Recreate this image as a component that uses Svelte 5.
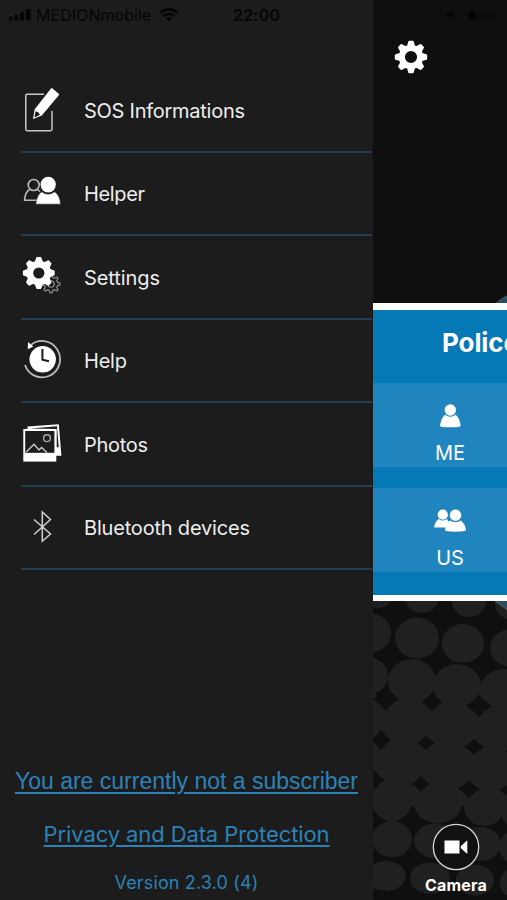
<script>
  const items = [
    { icon: 'edit', label: 'SOS Informations', w: 161 },
    { icon: 'helper', label: 'Helper', w: 61 },
    { icon: 'settings', label: 'Settings', w: 76 },
    { icon: 'help', label: 'Help', w: 43 },
    { icon: 'photos', label: 'Photos', w: 64 },
    { icon: 'bluetooth', label: 'Bluetooth devices', w: 166 }
  ];

  // Halftone backdrop: [cx, cy, rx, ry]
  const dots = [
    [4, 592, 17, 16], [49, 594, 18, 19], [96, 599, 17.5, 18], [139, 603, 17, 17],
    [-1, 633, 19, 19], [44, 638, 22, 20.5], [90, 643.5, 21, 19.5], [136, 648, 19, 18.5],
    [-3, 676, 18, 18], [39, 681, 24, 22], [84, 686, 24, 22], [131, 692, 25, 23],
    [19, 801, 20, 20], [65, 803, 24, 20], [111, 807, 20, 19], [142, 810, 14, 18],
    [19, 839, 20, 18], [62, 841, 21, 17.5], [107, 844, 21, 17], [144, 847, 18, 17],
    [13, 876, 20, 15], [57, 878, 20, 15.5], [102, 880, 19, 15.5], [141, 883, 14, 15]
  ];
  // Gaps where the dots have merged: [cx, cy, half width, half height]
  const gaps = [
    [13, 699, 13, 12], [59, 702, 11, 9], [106, 706, 13, 11],
    [8, 740, 10, 10], [53, 743, 9, 7], [101, 747, 10, 8], [137, 751, 5, 4],
    [1, 780, 11, 10], [48, 784, 9, 8], [96, 789, 11, 9], [134, 790, 8, 5]
  ];
  const diamond = ([x, y, w, h]) =>
    `M${x} ${y - h}Q${x + w * 0.42} ${y - h * 0.42} ${x + w} ${y}Q${x + w * 0.42} ${y + h * 0.42} ${x} ${y + h}Q${x - w * 0.42} ${y + h * 0.42} ${x - w} ${y}Q${x - w * 0.42} ${y - h * 0.42} ${x} ${y - h}Z`;

  function gear(cx, cy, outer, body, hole) {
    const pts = [];
    for (let i = 0; i < 8; i++) {
      const a = (i * Math.PI) / 4 - Math.PI / 2;
      for (const [r, d] of [[body, -0.26], [outer, -0.11], [outer, 0.11], [body, 0.26]]) {
        pts.push(`${(cx + r * Math.cos(a + d)).toFixed(2)} ${(cy + r * Math.sin(a + d)).toFixed(2)}`);
      }
    }
    return `M${pts.join('L')}ZM${cx - hole} ${cy}a${hole} ${hole} 0 1 0 ${2 * hole} 0a${hole} ${hole} 0 1 0 ${-2 * hole} 0Z`;
  }
</script>

<div class="screen">
  <aside class="drawer">
    <header class="status">
      <svg class="signal" width="24" height="14" viewBox="0 0 24 14">
        <rect x="0" y="8.5" width="3.5" height="4" rx="1" /><rect x="5.5" y="6.5" width="4" height="6" rx="1" />
        <rect x="11" y="4" width="4.2" height="8.5" rx="1" /><rect x="17" y="1" width="4.8" height="11.5" rx="1" />
      </svg>
      <span class="carrier">MEDIONmobile</span>
      <svg class="wifi" width="20" height="14" viewBox="0 0 20 14">
        <path d="M1.5 4.7Q10-2.2 18.5 4.7M4.5 8Q10 3.5 15.5 8" fill="none" stroke="#050505" stroke-width="2.4" />
        <path d="M6.8 10.2Q10 7.7 13.2 10.2L10 13.4Z" />
      </svg>
      <span class="time">22:00</span>
    </header>

    <nav>
      {#each items as item}
        <div class="row">
          <svg class="icon" width="42" height="46" viewBox="0 0 42 46">
            {#if item.icon === 'edit'}
              <path d="M25 7.2H7Q5.8 7.2 5.8 8.4V42Q5.8 43.7 7 43.7H30.5Q32 43.7 32 42V22" fill="none" stroke="#c8c8c8" stroke-width="1.5" />
              <path d="M24 5H33V24L24 24Z" fill="#1c1c1c" />
              <path d="M32.2 1.2L38.7 6.7Q39.3 7.4 38.8 8.2L21.8 28.4L13 32L14.7 22.2L31 1.5Q31.5.8 32.2 1.2Z" fill="#fff" />
              <path d="M15.6 24.2Q18.5 24.5 20 27.8L15.3 30.2L14.5 29.6Z" fill="#1c1c1c" />
            {:else if item.icon === 'helper'}
              <g fill="none" stroke="#bbb" stroke-width="1.6">
                <circle cx="13.7" cy="15" r="5.5" />
                <path d="M9.6 19.5Q5 22 4.6 30.3H18M17.5 19.5L20 21.5" />
              </g>
              <path d="M21.7 21.8Q28 26.5 34.6 21.8Q40 25 40.6 34.2H15.7Q16.7 25 21.7 21.8Z" fill="#fff" stroke="#1c1c1c" stroke-width=".6" />
              <ellipse cx="28.2" cy="14.6" rx="7.6" ry="7.9" fill="#fff" />
            {:else if item.icon === 'settings'}
              <path d={gear(31, 30, 9, 6.7, 3.2)} fill="none" stroke="#888" stroke-width="1.3" stroke-linejoin="round" />
              <path d={gear(18.8, 19, 15, 11.5, 6.6)} fill="#fff" stroke="#fff" stroke-width="2" stroke-linejoin="round" fill-rule="evenodd" />
            {:else if item.icon === 'help'}
              <path d="M11.3 7.6A18 18.2 0 1 1 5 28" fill="none" stroke="#bbb" stroke-width="1.8" />
              <path d="M8 5L7.8 12.3L13.3 9.6Z" fill="#fff" />
              <circle cx="22.7" cy="22.3" r="13.2" fill="#fff" />
              <path d="M22.4 12V22.7L29 24.3" fill="none" stroke="#1c1c1c" stroke-width="2" />
            {:else if item.icon === 'photos'}
              <path d="M7.5 8.3V5.5L38.8 3.2L41.4 34.8H36V8.3Z" fill="#fff" />
              <path d="M10 7.4L37 5.3L38.7 26L36.6 26.5V8Z" fill="#1c1c1c" />
              <rect x="3.3" y="8" width="33" height="32.6" fill="#fff" />
              <rect x="5.2" y="10" width="29.2" height="21.8" fill="#1c1c1c" />
              <path d="M6.2 31L14 23.3L19 29L21.5 26.5L27 31.5" fill="none" stroke="#ccc" stroke-width="1.3" />
              <circle cx="27" cy="17.2" r="3.4" fill="none" stroke="#aaa" stroke-width="1.4" />
            {:else}
              <path d="M14 15.5L30.5 30L22.3 37.2V8L30.5 15.5L14 30.5" fill="none" stroke="#d0d0d0" stroke-width="1.5" />
            {/if}
          </svg>
          <svg class="label" width={item.w + 4} height="30"><text x="0" y="22" textLength={item.w}>{item.label}</text></svg>
        </div>
      {/each}
    </nav>

    <footer>
      <a class="sub" href="#subscribe">You are currently not a subscriber</a>
      <a class="privacy" href="#privacy">Privacy and Data Protection</a>
      <span class="version">Version 2.3.0 (4)</span>
    </footer>
  </aside>

  <main>
    <svg class="backdrop" width="134" height="900" viewBox="0 0 134 900">
      <g fill="#202020">
        {#each dots as [cx, cy, rx, ry]}<ellipse {cx} {cy} {rx} {ry} />{/each}
        <path d="M0 690Q13 711 26 698Q38 684 47 695Q60 713 72 698Q84 684 94 700Q108 717 118 699L134 695V806H0Z" />
      </g>
      <g fill="#0f0f0f">{#each gaps as g}<path d={diamond(g)} />{/each}</g>
      <path d="M123 304Q128 299 134 296V304ZM122 601L134 610V601Z" fill="#294d60" />
      <path d="M123 303Q128 298.5 134 296M122 601L134 609.5" fill="none" stroke="#596062" stroke-width="1" />
      <g fill="#040404">
        <path d="M71 15L81 10L77 20L76 15Z" />
        <path d="M97 10h4v2q2 1 2 3v5h-8v-5q0-2 2-3Z" />
        <rect x="104" y="10" width="19" height="10" rx="2" fill="#0c0c0c" />
      </g>
    </svg>

    <div class="top">
      <svg width="36" height="36" viewBox="0 0 36 36">
        <path d={gear(18, 18, 15.2, 11.2, 7.2)} fill="#fff" stroke="#fff" stroke-width="2.2" stroke-linejoin="round" fill-rule="evenodd" />
      </svg>
    </div>

    <section class="card">
      <h2>Police</h2>
      <div class="tile">
        <svg width="36" height="26" viewBox="0 0 36 26" fill="#fff">
          <circle cx="18.3" cy="7" r="5.7" />
          <path d="M13 11.7Q18.3 15.8 23.7 11.7Q28 15.5 28.7 22.7Q28.8 24.2 18.3 24.2T8 22.7Q8.8 15.5 13 11.7Z" />
        </svg>
        <span>ME</span>
      </div>
      <div class="tile">
        <svg width="36" height="26" viewBox="0 0 36 26" fill="#fff">
          <circle cx="10.8" cy="6.7" r="5.1" />
          <path d="M6.7 10.9Q11 14 15 11L20 19.5H2.4Q2 19 2.4 17.5Q4 12.5 6.7 10.9Z" />
          <path d="M17.8 12.5Q23.5 15.9 28.8 12.5Q33.3 16 34 22Q34 23.7 23.3 23.7T13 22Q13.8 15.5 17.8 12.5Z" />
          <circle cx="23.5" cy="7.2" r="6.1" stroke="#2085be" stroke-width=".8" />
        </svg>
        <span>US</span>
      </div>
    </section>

    <div class="camera">
      <svg width="48" height="48" viewBox="0 0 48 48">
        <circle cx="24" cy="24" r="22.7" fill="#111" stroke="#d7d7d7" stroke-width="1.3" />
        <path d="M12.5 17.5H27.5V30.5H12.5ZM28.7 24Q28.7 23 29.5 22.4L35.3 17.2V31L29.5 25.8Q28.7 25 28.7 24Z" fill="#fff" />
      </svg>
      <span>Camera</span>
    </div>
  </main>
</div>

<style>
  .screen {
    display: flex;
    width: 507px;
    height: 900px;
    overflow: hidden;
    background: #0f0f0f;
    font-family: Inter, 'Liberation Sans', sans-serif;
  }
  svg { display: block; flex: none; }
  .drawer {
    display: flex;
    flex-direction: column;
    width: 373px;
    flex: none;
    background: #1c1c1c;
  }
  .status {
    display: flex;
    align-items: center;
    height: 30px;
    padding-left: 9px;
    margin-bottom: 39px;
    color: #050505;
    fill: #050505;
    font-size: 16px;
  }
  .signal { margin-right: 3px; }
  .carrier { width: 117px; letter-spacing: .05px; white-space: nowrap; }
  .wifi { margin: 0 0 0 6px; }
  .time { margin-left: 54px; font-weight: 600; letter-spacing: .2px; }
  .row {
    display: flex;
    align-items: center;
    box-sizing: border-box;
    height: 83.5px;
    margin: 0 1px 0 21px;
    border-bottom: 2px solid #203f52;
  }
  .icon { margin-left: -1px; }
  .label {
    margin-left: 22px;
    margin-top: 2px;
    fill: #eee;
    font-size: 20px;
    overflow: visible;
  }
  footer {
    display: flex;
    flex-direction: column;
    align-items: center;
    margin-top: 195.5px;
    color: #2c82b7;
    white-space: nowrap;
  }
  footer a {
    color: inherit;
    text-decoration: underline;
    text-decoration-thickness: 1.6px;
    text-underline-offset: 3px;
  }
  .sub { font-family: 'Liberation Sans', sans-serif; font-size: 23px; line-height: 30px; }
  .privacy { margin-top: 23px; font-size: 22px; line-height: 30px; letter-spacing: -.1px; }
  .version { margin-top: 22px; font-size: 18px; line-height: 24px; letter-spacing: .15px; }
  main {
    position: relative;
    display: flex;
    flex-direction: column;
    width: 134px;
    height: 900px;
    overflow: hidden;
    color: #fff;
  }
  .backdrop { position: absolute; inset: 0; }
  .top { position: relative; height: 264px; padding: 39px 0 0 20px; }
  .card {
    position: relative;
    box-sizing: border-box;
    width: 154px;
    height: 298px;
    flex: none;
    border-top: 7px solid #fff;
    border-bottom: 6px solid #fff;
    background: #0578b6;
  }
  h2 {
    height: 73px;
    margin: 0;
    padding-left: 69px;
    line-height: 65px;
    font-size: 26px;
    font-weight: 700;
    letter-spacing: -.1px;
  }
  .tile {
    display: flex;
    flex-direction: column;
    align-items: center;
    box-sizing: border-box;
    height: 84px;
    margin-bottom: 21px;
    padding-top: 20px;
    background: #2085be;
    font-size: 20px;
  }
  .tile span { margin-top: 11px; line-height: 26px; }
  .camera {
    position: relative;
    display: flex;
    flex-direction: column;
    align-items: center;
    width: 80px;
    margin: 221.5px 0 0 43px;
    font-size: 16px;
    font-weight: 700;
    line-height: 24px;
  }
  .camera span { margin-top: 2.5px; letter-spacing: .2px; }
</style>
